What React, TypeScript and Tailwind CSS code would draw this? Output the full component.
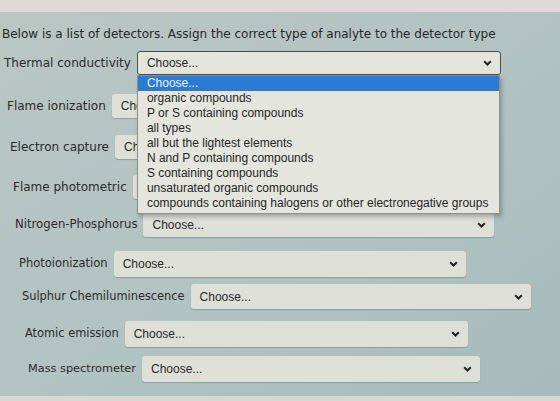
const rows = [
  { label: "Thermal conductivity", row: "mt-[8px] ml-[4px] h-[24px]", text: "text-[12px]", box: "w-[364px]", open: true },
  { label: "Flame ionization", row: "mt-[19px] ml-[7px] h-[24px]", text: "text-[12px]", box: "w-[350px]" },
  { label: "Electron capture", row: "mt-[17px] ml-[10px] h-[24px]", text: "text-[12px]", box: "w-[350px]" },
  { label: "Flame photometric", row: "mt-[16px] ml-[13px] h-[24px]", text: "text-[12px]", box: "w-[350px]" },
  { label: "Nitrogen-Phosphorus", row: "mt-[14px] ml-[15px] h-[24px]", text: "text-[11.7px]", box: "w-[351px]" },
  { label: "Photoionization", row: "mt-[14px] ml-[19px] h-[26px]", text: "text-[11.5px]", box: "w-[352px]" },
  { label: "Sulphur Chemiluminescence", row: "mt-[7px] ml-[22px] h-[25px]", text: "text-[11.4px]", box: "w-[340px]" },
  { label: "Atomic emission", row: "mt-[12px] ml-[25px] h-[26px]", text: "text-[11.4px]", box: "w-[343px]" },
  { label: "Mass spectrometer", row: "mt-[9px] ml-[28px] h-[26px]", text: "text-[11.3px]", box: "w-[338px]" },
];

const options = [
  "organic compounds",
  "P or S containing compounds",
  "all types",
  "all but the lightest elements",
  "N and P containing compounds",
  "S containing compounds",
  "unsaturated organic compounds",
  "compounds containing halogens or other electronegative groups",
];

function Chevron() {
  return (
    <svg width="9" height="6" viewBox="0 0 9 6" className="shrink-0">
      <path d="M1.2 1.2 L4.5 4.5 L7.8 1.2" fill="none" stroke="#232323" strokeWidth="2" />
    </svg>
  );
}

function OptionList() {
  return (
    <div className="absolute left-0 top-[24px] z-10 w-[363px] border border-[#8d8f88] bg-[#e4e5dd] pb-[2px] text-[12px] leading-[15px] text-[#262626] shadow-[2px_3px_4px_rgba(60,70,70,0.35)]">
      <div className="bg-[#2b7bd4] pl-[9px] text-[#e6f0fb]">Choose...</div>
      {options.map((o) => (
        <div key={o} className="pl-[9px] whitespace-nowrap">
          {o}
        </div>
      ))}
    </div>
  );
}

type RowProps = { label: string; row: string; text: string; box: string; open?: boolean };

function Row({ label, row, text, box, open }: RowProps) {
  return (
    <div className={`flex items-center ${row}`}>
      <span className={`${text} text-[#2a2c2b] whitespace-nowrap`}>{label}</span>
      <div className={`relative ml-[6px] h-full ${box}`}>
        <div
          className={`flex h-full items-center justify-between rounded-[3px] pl-[9px] pr-[8px] ${
            open
              ? "border border-[#4c4e4c] bg-[#e3e4db]"
              : "bg-[#dedfd6] shadow-[0_1px_1px_rgba(90,100,100,0.4)]"
          }`}
        >
          <span className="font-['Liberation_Sans',Arial,sans-serif] text-[12px] text-[#2a2a2a]">Choose...</span>
          <Chevron />
        </div>
        {open && (
          <div className="font-['Liberation_Sans',Arial,sans-serif]">
            <OptionList />
          </div>
        )}
      </div>
    </div>
  );
}

export default function App() {
  return (
    <div className="flex h-[401px] w-[560px] flex-col overflow-hidden bg-gradient-to-br from-[#bac6c2] via-[#b2c3c2] to-[#a7bbbc] font-['DejaVu_Sans',Verdana,sans-serif]">
      <div className="h-[12px] shrink-0 bg-[#e0d9d9]" />
      <div className="flex flex-1 flex-col">
        <p className="mt-[13px] ml-[2px] text-[12px] text-[#262827] whitespace-nowrap">
          Below is a list of detectors. Assign the correct type of analyte to the detector type
        </p>
        {rows.map((r) => (
          <Row key={r.label} {...r} />
        ))}
      </div>
      <div className="h-[5px] shrink-0 bg-[#d6d8d6]" />
    </div>
  );
}
